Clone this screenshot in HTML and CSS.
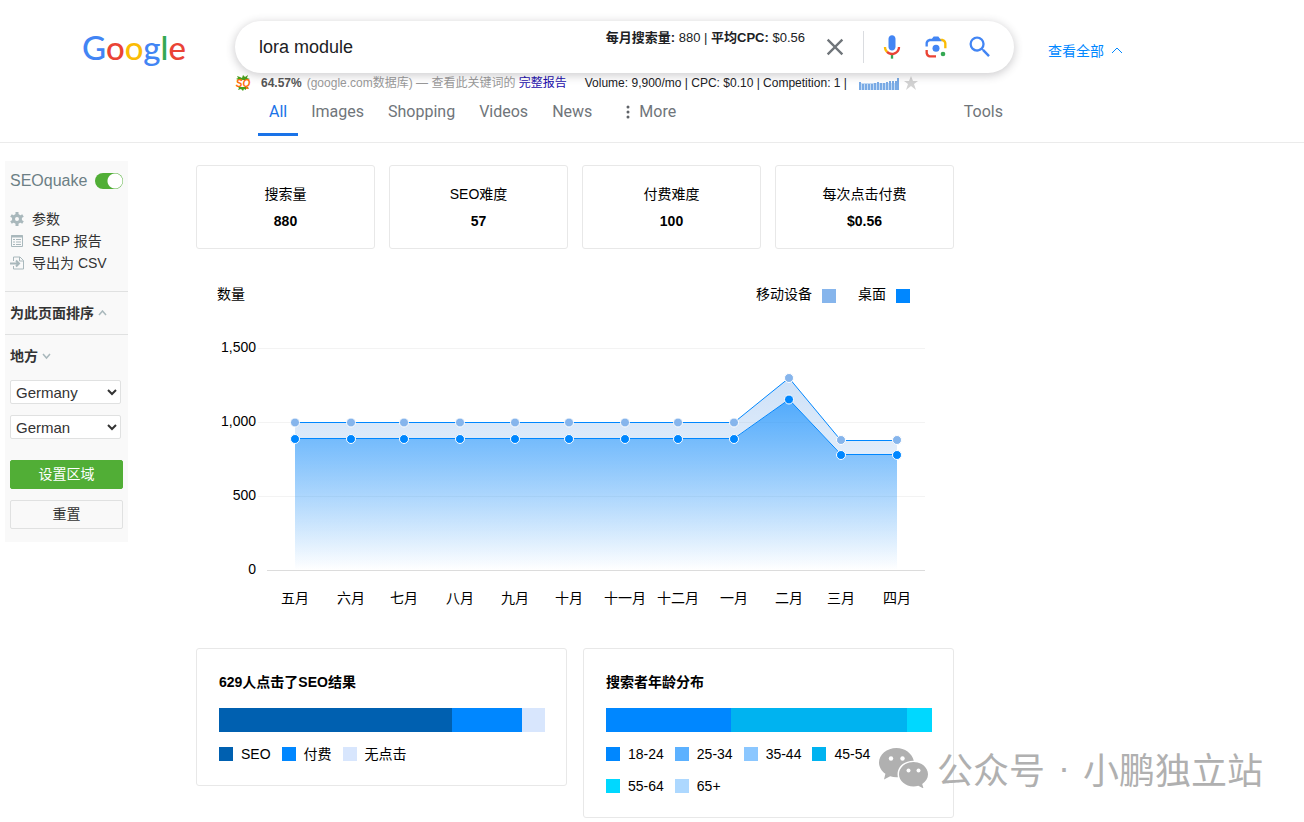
FILE: index.html
```
<!DOCTYPE html>
<html lang="zh-CN">
<head>
    <meta charset="UTF-8">
    <meta name="viewport" content="width=device-width, initial-scale=1.0">
    <title>lora module - Google Search</title>
    <link rel="stylesheet" href="styles.css">
</head>
<body>
    <header class="header">
        <div class="header-top">
            <a href="#" class="logo" aria-label="Google"><span class="blue">G</span><span class="red">o</span><span class="yellow">o</span><span class="blue">g</span><span class="green">l</span><span class="red">e</span></a>

            <form class="search-box">
                <input type="text" class="search-input" value="lora module" aria-label="Search">
                <div class="search-metrics"><b>每月搜索量:</b> 880 | <b>平均CPC:</b> $0.56</div>
                <button type="button" class="icon-button" aria-label="Clear">
                    <svg viewBox="0 0 24 24"><path fill="#70757a" d="M19 6.41L17.59 5 12 10.59 6.41 5 5 6.41 10.59 12 5 17.59 6.41 19 12 13.41 17.59 19 19 17.59 13.41 12z"/></svg>
                </button>
                <span class="search-divider"></span>
                <button type="button" class="icon-button" aria-label="Search by voice">
                    <svg viewBox="0 0 24 24">
                        <path fill="#4285f4" d="M12 15c1.66 0 3-1.31 3-2.97V5.01C15 3.35 13.66 2 12 2S9 3.34 9 5.01v7.02C9 13.69 10.34 15 12 15z"/>
                        <path fill="#34a853" d="M11 18.08h2V22h-2z"/>
                        <path fill="#fbbc05" d="M7.05 16.87C5.78 15.54 5 14.04 5 12h2c0 1.45.56 2.42 1.47 3.38v.32l-1.15 1.18z"/>
                        <path fill="#ea4335" d="M12 16.93a4.97 5.25 0 0 1-3.54-1.55l-1.41 1.49C8.31 18.21 10.07 19 12 19c3.87 0 6.99-2.92 6.99-7H17c0 2.92-2.24 4.93-5 4.93z"/>
                    </svg>
                </button>
                <button type="button" class="icon-button" aria-label="Search by image">
                    <svg viewBox="0 0 192 192">
                        <circle fill="#34a853" cx="144" cy="144" r="16"/>
                        <circle fill="#4285f4" cx="96" cy="104" r="24"/>
                        <path fill="#ea4335" d="M24 135.2c0 18.11 14.69 32.8 32.8 32.8H96v-16l-40.1-.1c-8.8 0-15.9-8.19-15.9-17.9v-18H24v19.2z"/>
                        <path fill="#fbbc04" d="M168 72.8c0-18.11-14.69-32.8-32.8-32.8H116l20 16c8.8 0 16 8.29 16 18v30h16V72.8z"/>
                        <path fill="#4285f4" d="M112 24H80L68 40H56.8C38.69 40 24 54.69 24 72.8V92h16V74c0-9.71 7.2-18 16-18h80l-24-32z"/>
                    </svg>
                </button>
                <button type="submit" class="icon-button" aria-label="Search">
                    <svg viewBox="0 0 24 24"><path fill="#4285f4" d="M15.5 14h-.79l-.28-.27A6.471 6.471 0 0 0 16 9.5 6.5 6.5 0 1 0 9.5 16c1.61 0 3.09-.59 4.23-1.57l.27.28v.79l5 4.99L20.49 19l-4.99-5zm-6 0C7.01 14 5 11.99 5 9.5S7.01 5 9.5 5 14 7.01 14 9.5 11.99 14 9.5 14z"/></svg>
                </button>
            </form>

            <a href="#" class="view-all">查看全部
                <svg width="12" height="8" viewBox="0 0 12 8"><path d="M1 7l5-5 5 5" fill="none" stroke="currentColor"/></svg>
            </a>
        </div>

        <div class="keyword-bar">
            <svg class="sq-icon" width="16" height="16" viewBox="0 0 16 16">
                <path d="M2 1l3 1 2 1 1-3 2 2 3-2-1 3 3 1-2 1H4L1 4l2-1zM3 12h10l1 2-3-1v2l-2-1-1 2-2-2-3 1 1-2z" fill="#4a9e1c"/>
                <text x="8" y="12" class="sq-text">SQ</text>
            </svg>
            <b class="keyword-percent">64.57%</b>
            <span class="keyword-note">(google.com数据库) — 查看此关键词的 <a href="#">完整报告</a></span>
            <span class="keyword-stats">Volume: 9,900/mo | CPC: $0.10 | Competition: 1 |</span>
            <svg class="sparkline" width="40" height="12" viewBox="0 0 40 12">
                <rect y="5" width="40" height="7" fill="#c5dcf5"/>
                <path d="M1 12V4M4 12V6M7 12V6M10 12V6M13 12V6M16 12V5M19 12V4M22 12V5M25 12V5M28 12V4M31 12V3M34 12V3M37 12V3M39 12V0" stroke="#7aabe5" stroke-width="2"/>
            </svg>
            <svg class="star" width="14" height="14" viewBox="0 0 14 14"><path d="M7 0l2 5h5l-4 3 2 6-5-4-5 4 2-6-4-3h5z" fill="#d2d2d2"/></svg>
        </div>

        <nav class="tabs">
            <a href="#" class="tab active">All</a>
            <a href="#" class="tab">Images</a>
            <a href="#" class="tab">Shopping</a>
            <a href="#" class="tab">Videos</a>
            <a href="#" class="tab">News</a>
            <a href="#" class="tab tab-more">
                <svg width="4" height="14" viewBox="0 0 4 14" fill="#5f6368"><circle cx="2" cy="2" r="1.500"/><circle cx="2" cy="7" r="1.500"/><circle cx="2" cy="12" r="1.500"/></svg>More
            </a>
            <a href="#" class="tab tab-tools">Tools</a>
        </nav>
    </header>

    <div class="page">
        <aside class="sidebar">
            <div class="sidebar-title">
                <label for="seoquake">SEOquake</label>
                <input type="checkbox" id="seoquake" class="toggle" checked>
            </div>
            <ul class="sidebar-menu">
                <li>
                    <svg viewBox="0 0 14 14">
                        <circle cx="7" cy="7" r="3.500" fill="none" stroke="#a9b8bc" stroke-width="3"/>
                        <path d="M7 0v3M7 11v3M1 3.500l2.500 1.500M10.500 9l2.500 1.500M1 10.500L3.500 9M10.500 5L13 3.500" stroke="#a9b8bc" stroke-width="3"/>
                    </svg>
                    <a href="#">参数</a>
                </li>
                <li>
                    <svg viewBox="0 0 14 14">
                        <path d="M1.500 1.500h11v11h-11z" fill="none" stroke="#a9b8bc"/>
                        <path d="M1 2.500h12" stroke="#a9b8bc" stroke-width="2"/>
                        <path d="M3 5.500h2M6 5.500h5M3 8h2M6 8h5M3 10.500h2M6 10.500h5" stroke="#a9b8bc"/>
                    </svg>
                    <a href="#">SERP 报告</a>
                </li>
                <li>
                    <svg viewBox="0 0 14 14" fill="none" stroke="#a9b8bc">
                        <path d="M3.500 5V1H10l3.500 3.500V13h-10v-3M9.500 1v4h4"/>
                        <path d="M0 7.500h8M6 4.500l3 3-3 3" stroke-width="2"/>
                    </svg>
                    <a href="#">导出为 CSV</a>
                </li>
            </ul>
            <div class="sidebar-sort">为此页面排序
                <svg width="9" height="8" viewBox="0 0 9 8"><path d="M1 5l3.500-4L8 5" fill="none" stroke="#a9b8bc" stroke-width="1.500"/></svg>
            </div>
            <form class="sidebar-region">
                <div class="sidebar-heading">地方
                    <svg width="9" height="8" viewBox="0 0 9 8"><path d="M1 1l3.500 4L8 1" fill="none" stroke="#a9b8bc" stroke-width="1.500"/></svg>
                </div>
                <select class="region-select" aria-label="Country"><option>Germany</option></select>
                <select class="region-select" aria-label="Language"><option>German</option></select>
                <button type="button" class="button button-primary">设置区域</button>
                <button type="reset" class="button">重置</button>
            </form>
        </aside>

        <main class="report">
            <section class="stats">
                <div class="stat-card"><div>搜索量</div><b>880</b></div>
                <div class="stat-card"><div>SEO难度</div><b>57</b></div>
                <div class="stat-card"><div>付费难度</div><b>100</b></div>
                <div class="stat-card"><div>每次点击付费</div><b>$0.56</b></div>
            </section>

            <section class="volume">
                <div class="volume-header">
                    <span class="volume-title">数量</span>
                    <span class="volume-key">移动设备<i class="swatch mobile"></i></span>
                    <span class="volume-key">桌面<i class="swatch desktop"></i></span>
                </div>
                <svg class="chart" viewBox="0 0 758 295">
                    <defs>
                        <linearGradient id="mobile-fill" gradientUnits="userSpaceOnUse" x1="0" y1="58" x2="0" y2="250">
                            <stop offset="0" stop-color="#82b3ec" stop-opacity="0.4"/>
                            <stop offset="1" stop-color="#82b3ec" stop-opacity="0"/>
                        </linearGradient>
                        <linearGradient id="desktop-fill" gradientUnits="userSpaceOnUse" x1="0" y1="79" x2="0" y2="250">
                            <stop offset="0" stop-color="#0087ff" stop-opacity="0.620"/>
                            <stop offset="1" stop-color="#0087ff" stop-opacity="0"/>
                        </linearGradient>
                    </defs>

                    <!-- Grid -->
                    <path class="grid-line" d="M62 28.500h667M62 102.500h667M62 176.500h667"/>
                    <path class="axis-line" d="M71 250.500h658"/>
                    <g class="y-labels">
                        <text x="60" y="32">1,500</text>
                        <text x="60" y="106">1,000</text>
                        <text x="60" y="180">500</text>
                        <text x="60" y="254">0</text>
                    </g>

                    <!-- Series -->
                    <path fill="url(#mobile-fill)" d="M99 102.500H538L593 58 645 120.500H701V250H99z"/>
                    <path fill="url(#desktop-fill)" d="M99 119H538L593 79.500 645 135H701V250H99z"/>
                    <path class="series-line" d="M99 102.500H538L593 58 645 120.500H701"/>
                    <path class="series-line" d="M99 118.500H538L593 79.500 645 134.500H701"/>
                    <g class="points mobile-points">
                        <circle cx="99" cy="102.500" r="4.500"/><circle cx="155" cy="102.500" r="4.500"/><circle cx="208" cy="102.500" r="4.500"/>
                        <circle cx="264" cy="102.500" r="4.500"/><circle cx="319" cy="102.500" r="4.500"/><circle cx="373" cy="102.500" r="4.500"/>
                        <circle cx="429" cy="102.500" r="4.500"/><circle cx="482" cy="102.500" r="4.500"/><circle cx="538" cy="102.500" r="4.500"/>
                        <circle cx="593" cy="58" r="4.500"/><circle cx="645" cy="120" r="4.500"/><circle cx="701" cy="120" r="4.500"/>
                    </g>
                    <g class="points desktop-points">
                        <circle cx="99" cy="119" r="4.500"/><circle cx="155" cy="119" r="4.500"/><circle cx="208" cy="119" r="4.500"/>
                        <circle cx="264" cy="119" r="4.500"/><circle cx="319" cy="119" r="4.500"/><circle cx="373" cy="119" r="4.500"/>
                        <circle cx="429" cy="119" r="4.500"/><circle cx="482" cy="119" r="4.500"/><circle cx="538" cy="119" r="4.500"/>
                        <circle cx="593" cy="79.500" r="4.500"/><circle cx="645" cy="135" r="4.500"/><circle cx="701" cy="135" r="4.500"/>
                    </g>

                    <g class="x-labels">
                        <text x="99" y="283">五月</text>
                        <text x="155" y="283">六月</text>
                        <text x="208" y="283">七月</text>
                        <text x="264" y="283">八月</text>
                        <text x="319" y="283">九月</text>
                        <text x="373" y="283">十月</text>
                        <text x="429" y="283">十一月</text>
                        <text x="482" y="283">十二月</text>
                        <text x="538" y="283">一月</text>
                        <text x="593" y="283">二月</text>
                        <text x="645" y="283">三月</text>
                        <text x="701" y="283">四月</text>
                    </g>
                </svg>
            </section>

            <section class="breakdowns">
                <div class="breakdown">
                    <h2>629人点击了SEO结果</h2>
                    <div class="bar">
                        <span class="seo" style="width: 71.5%"></span>
                        <span class="paid" style="width: 21.5%"></span>
                        <span class="no-click" style="width: 7%"></span>
                    </div>
                    <ul class="legend">
                        <li><i class="swatch seo"></i>SEO</li>
                        <li><i class="swatch paid"></i>付费</li>
                        <li><i class="swatch no-click"></i>无点击</li>
                    </ul>
                </div>
                <div class="breakdown">
                    <h2>搜索者年龄分布</h2>
                    <div class="bar">
                        <span class="age-18" style="width: 38.4%"></span>
                        <span class="age-45" style="width: 54%"></span>
                        <span class="age-55" style="width: 7.6%"></span>
                    </div>
                    <ul class="legend">
                        <li><i class="swatch age-18"></i>18-24</li>
                        <li><i class="swatch age-25"></i>25-34</li>
                        <li><i class="swatch age-35"></i>35-44</li>
                        <li><i class="swatch age-45"></i>45-54</li>
                        <li><i class="swatch age-55"></i>55-64</li>
                        <li><i class="swatch age-65"></i>65+</li>
                    </ul>
                </div>
            </section>
        </main>
    </div>

    <div class="watermark">
        <svg width="50" height="40" viewBox="0 0 50 40">
            <path fill="#b0b0b0" d="M17.500 0C7.800 0 0 6.500 0 14.600c0 4.600 2.500 8.500 6.400 11.200L5 31.500l6.200-3.300c2 .6 4 1 6.300 1h1.400C16.800 20 24.500 12.400 34.800 12.700 33 5.200 25.800 0 17.500 0z"/>
            <path fill="#b0b0b0" d="M49 26.200c0-6.700-6.500-12.200-14.500-12.200S20 19.500 20 26.200s6.500 12.200 14.500 12.200c1.700 0 3.300-.3 4.800-.7L44.500 40.500l-1.300-4.600C46.700 33.700 49 30.200 49 26.200z"/>
            <g fill="#fff"><circle cx="12" cy="10.500" r="2.200"/><circle cx="23.500" cy="10.500" r="2.200"/><circle cx="29.500" cy="22.500" r="2"/><circle cx="39.500" cy="22.500" r="2"/></g>
        </svg>
        <span>公众号</span>
        <span class="watermark-dot">·</span>
        <span>小鹏独立站</span>
    </div>
</body>
</html>
```
FILE: styles.css
```
*, *::before, *::after {
    box-sizing: border-box;
    margin: 0;
    padding: 0;
}

body {
    font-family: "Liberation Sans", "Noto Sans CJK SC", Arial, sans-serif;
    font-size: 14px;
    color: #000;
    background-color: #fff;
}

a {
    color: inherit;
    text-decoration: none;
}

ul {
    list-style: none;
}

input, select, button {
    font-family: inherit;
}

/* Header */
.header {
    padding: 21px 0 6px;
    border-bottom: 1px solid #ebebeb;
}

.header-top {
    display: flex;
    align-items: center;
    padding-left: 82px;
}

.logo {
    flex: 0 0 153px;
    font-family: Lato, "Liberation Sans", sans-serif;
    font-size: 33px;
    font-weight: 500;
    line-height: 52px;
}

.blue { color: #4285f4; }
.red { color: #ea4335; }
.yellow { color: #fbbc05; }
.green { color: #34a853; }

.search-box {
    flex: 0 1 779px;
    display: flex;
    align-items: center;
    gap: 16px;
    height: 52px;
    padding: 0 20px 0 24px;
    background-color: #fff;
    border-radius: 26px;
    box-shadow: 0 2px 8px 1px rgba(64, 60, 67, 0.24);
    z-index: 1;
}

.search-input {
    flex: 1;
    min-width: 0;
    border: none;
    outline: none;
    font-size: 18px;
    color: #202124;
}

.search-metrics {
    align-self: flex-start;
    padding-top: 7px;
    font-size: 13px;
    line-height: 20px;
    color: #202124;
    white-space: nowrap;
}

.icon-button {
    width: 28px;
    height: 28px;
    border: none;
    background: none;
    cursor: pointer;
}

.icon-button svg {
    display: block;
}

.search-divider {
    width: 1px;
    height: 32px;
    margin: 0 -2px;
    background-color: #dadce0;
}

.view-all {
    display: flex;
    align-items: center;
    gap: 7px;
    margin-left: 34px;
    padding-top: 6px;
    color: #0087ff;
    white-space: nowrap;
}

.keyword-bar {
    display: flex;
    align-items: center;
    height: 20px;
    padding-left: 235px;
    font-size: 12px;
    line-height: 20px;
    color: #202124;
    white-space: nowrap;
}

.sq-text {
    fill: #ff6d0a;
    font-size: 10px;
    font-weight: bold;
    font-style: italic;
    text-anchor: middle;
}

.keyword-percent {
    margin: 0 5px 0 10px;
    color: #555;
}

.keyword-note {
    color: #999;
}

.keyword-note a {
    color: #1a0dab;
}

.keyword-stats {
    margin-left: 18px;
}

.sparkline {
    margin: 2px 5px 0 12px;
}

/* Result tabs */
.tabs {
    display: flex;
    gap: 2px;
    max-width: 1014px;
    padding-left: 258px;
    font-family: Roboto, "Liberation Sans", sans-serif;
    font-size: 16px;
    line-height: 20px;
    color: #70757a;
}

.tab {
    padding: 9px 11px 11px;
    border-bottom: 3px solid transparent;
}

.tab.active {
    color: #1a73e8;
    border-bottom-color: #1a73e8;
}

.tab-more {
    display: flex;
    align-items: center;
    gap: 9px;
    margin-left: 10px;
}

.tab-tools {
    margin-left: auto;
}

/* Page */
.page {
    display: flex;
    align-items: flex-start;
    gap: 68px;
    padding: 18px 5px 4px;
}

.sidebar {
    flex: 0 0 123px;
    padding-bottom: 13px;
    background-color: #f9f9f9;
    color: #333;
}

.sidebar-title {
    display: flex;
    justify-content: space-between;
    align-items: center;
    padding: 10px 5px 0;
    font-size: 16px;
    line-height: 20px;
    color: #6c7f85;
}

.toggle {
    appearance: none;
    width: 28px;
    height: 16px;
    border-radius: 8px;
    background: radial-gradient(circle at 20px 8px, #fff 7px, #51ae36 8px);
    cursor: pointer;
}

.sidebar-menu {
    padding: 17px 5px;
    line-height: 22px;
}

.sidebar-menu li {
    display: flex;
    align-items: center;
    gap: 8px;
    white-space: nowrap;
}

.sidebar-menu svg {
    width: 14px;
    height: 14px;
}

.sidebar-sort {
    padding: 10px 5px;
    border-top: 1px solid #e0e1e1;
    border-bottom: 1px solid #e0e1e1;
    font-weight: bold;
    line-height: 22px;
}

.sidebar-region {
    display: flex;
    flex-direction: column;
    padding: 10px 5px 0;
}

.sidebar-heading {
    font-weight: bold;
    line-height: 22px;
    margin-bottom: 13px;
}

.region-select {
    height: 24px;
    margin: 0 2px 11px 0;
    padding: 0 4px 0 1px;
    border: 1px solid #e0e1e1;
    border-radius: 2px;
    background-color: #fff;
    font-size: 15px;
    color: #333;
}

.button {
    height: 29px;
    padding-bottom: 4px;
    border: 1px solid #e0e1e1;
    border-radius: 2px;
    background-color: #f9f9f9;
    font-size: 14px;
    color: #333;
    cursor: pointer;
}

.button-primary {
    margin: 10px 0 11px;
    border-color: #51ae36;
    background-color: #51ae36;
    color: #fff;
}

/* Report */
.report {
    flex: 0 1 758px;
    min-width: 0;
    padding-top: 4px;
}

.stats {
    display: grid;
    grid-template-columns: repeat(4, 1fr);
    gap: 14px;
}

.stat-card {
    padding: 15px 0 13px;
    border: 1px solid #e8e8e8;
    border-radius: 3px;
    line-height: 27px;
    text-align: center;
}

.volume {
    margin: 35px 0 33px;
}

.volume-header {
    display: flex;
    gap: 22px;
    padding: 0 44px 0 21px;
    line-height: 20px;
}

.volume-title {
    margin-right: auto;
}

.volume-key {
    display: flex;
    align-items: center;
    gap: 10px;
}

.swatch {
    width: 14px;
    height: 14px;
}

.volume-key .swatch {
    margin-top: 4px;
}

.chart {
    display: block;
    width: 100%;
    margin-top: 16px;
    font-size: 14px;
}

.grid-line {
    stroke: #f3f3f3;
}

.axis-line {
    stroke: #dcdcdc;
}

.y-labels {
    text-anchor: end;
}

.x-labels {
    text-anchor: middle;
}

.series-line {
    fill: none;
    stroke: #0087ff;
}

.points {
    stroke: #fff;
}

.mobile-points { fill: #86b5ec; }
.desktop-points { fill: #0087ff; }

.breakdowns {
    display: grid;
    grid-template-columns: repeat(2, 1fr);
    align-items: start;
    gap: 16px;
}

.breakdown {
    padding: 22px 21px 15px 22px;
    border: 1px solid #e8e8e8;
    border-radius: 3px;
}

.breakdown h2 {
    font-size: 14px;
    line-height: 22px;
}

.bar {
    display: flex;
    height: 24px;
    margin: 15px 0 6px;
}

.legend {
    display: flex;
    flex-wrap: wrap;
    column-gap: 11px;
    line-height: 32px;
}

.legend li {
    display: flex;
    align-items: center;
    gap: 8px;
}

.mobile { background-color: #86b5ec; }
.desktop { background-color: #0087ff; }
.seo { background-color: #0060b0; }
.paid { background-color: #0087ff; }
.no-click { background-color: #d8e6fd; }
.age-18 { background-color: #0087ff; }
.age-25 { background-color: #5cb1ff; }
.age-35 { background-color: #8bc7ff; }
.age-45 { background-color: #00b3f0; }
.age-55 { background-color: #00d8ff; }
.age-65 { background-color: #add8ff; }

/* Watermark over the page corner */
.watermark {
    position: absolute;
    right: 41px;
    bottom: 30px;
    display: flex;
    align-items: center;
    gap: 13px;
    font-family: "Noto Sans CJK SC", sans-serif;
    font-size: 36px;
    line-height: 48px;
    color: #b0b0b0;
    pointer-events: none;
}

.watermark svg {
    margin-right: -5px;
}

.watermark-dot {
    font-family: "Liberation Sans", sans-serif;
}
```
